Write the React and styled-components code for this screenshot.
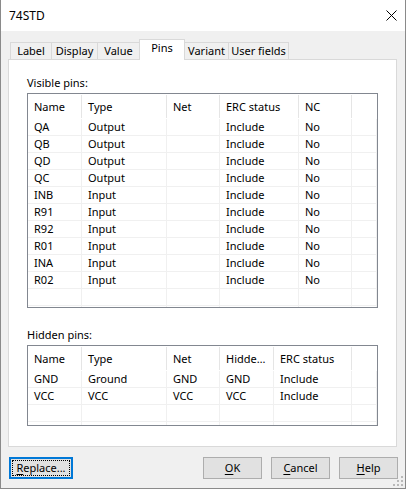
import React from "react";
import styled, { createGlobalStyle } from "styled-components";

const GlobalStyle = createGlobalStyle`
  html, body { margin: 0; padding: 0; background: #ffffff; }
  body { font-family: "Segoe UI", "Noto Sans", sans-serif; font-size: 11px; color: #000; }
  * { box-sizing: border-box; }
`;

const Window = styled.div`
  position: relative;
  width: 406px;
  height: 489px;
  border: 1px solid #8a8a8a;
  border-top: none;
  display: flex;
  flex-direction: column;
  background: #f0f0f0;
`;

const TitleBar = styled.div`
  height: 31px;
  flex: none;
  background: #ffffff;
  display: flex;
  align-items: center;
  justify-content: space-between;
  padding: 0 8px 0 8px;
  font-size: 12px;
`;

const CloseIcon = styled.svg`
  width: 11px;
  height: 11px;
  display: block;
`;

const Body = styled.div`
  flex: 1;
  display: flex;
  flex-direction: column;
  padding: 8px 8px 0 7px;
`;

const TabRow = styled.div`
  display: flex;
  align-items: flex-end;
  height: 20px;
  padding-left: 2px;
`;

const Tab = styled.div`
  width: ${(p) => p.$w}px;
  height: ${(p) => (p.$active ? 21 : 17)}px;
  margin-left: -1px;
  margin-bottom: ${(p) => (p.$active ? -1 : 0)}px;
  border: 1px solid #d9d9d9;
  border-bottom: none;
  background: ${(p) => (p.$active ? "#ffffff" : "#f0f0f0")};
  position: relative;
  z-index: ${(p) => (p.$active ? 2 : 1)};
  line-height: 15px;
  text-align: center;
  white-space: nowrap;
  &:first-child { margin-left: 0; }
`;

const Panel = styled.div`
  height: 388px;
  border: 1px solid #d9d9d9;
  background: #ffffff;
  padding: 15px 18px 20px 18px;
  display: flex;
  flex-direction: column;
`;

const GroupLabel = styled.div`
  line-height: 16px;
  height: 16px;
  margin-top: ${(p) => p.$mt || 0}px;
`;

const ListFrame = styled.div`
  margin-top: 2px;
  height: ${(p) => p.$h}px;
  border: 1px solid #828790;
  background: #ffffff;
  display: flex;
  flex-direction: column;
  overflow: hidden;
`;

const HeaderRow = styled.div`
  display: grid;
  grid-template-columns: ${(p) => p.$cols};
  height: 25px;
  flex: none;
`;

const HeaderCell = styled.div`
  position: relative;
  padding: 5px 0 0 6px;
  line-height: 15px;
  white-space: nowrap;
  overflow: hidden;
  &::after {
    content: "";
    position: absolute;
    right: 0;
    top: 1px;
    bottom: 1px;
    width: 1px;
    background: #e5e5e5;
  }
`;

const ListBody = styled.div`
  flex: 1;
  overflow: hidden;
`;

const Row = styled.div`
  display: grid;
  grid-template-columns: ${(p) => p.$cols};
  height: 17px;
  border-bottom: 1px solid #f0f0f0;
`;

const Cell = styled.div`
  border-right: 1px solid #f0f0f0;
  padding-left: 6px;
  line-height: 16px;
  white-space: nowrap;
  overflow: hidden;
`;

const Footer = styled.div`
  display: flex;
  justify-content: space-between;
  align-items: flex-start;
  padding-top: 10px;
`;

const ButtonGroup = styled.div`
  display: flex;
  gap: 9px;
  margin-right: -1px;
`;

const Button = styled.div`
  position: relative;
  width: ${(p) => p.$w}px;
  height: 22px;
  margin-left: ${(p) => p.$ml || 0}px;
  background: #e1e1e1;
  border: ${(p) => (p.$focused ? "2px solid #0078d7" : "1px solid #adadad")};
  display: flex;
  align-items: center;
  justify-content: center;
  line-height: 15px;
  padding-bottom: 1px;
  &::after {
    content: "";
    display: ${(p) => (p.$focused ? "block" : "none")};
    position: absolute;
    inset: 1px;
    border: 1px dotted #000;
  }
  u { text-decoration-thickness: 1px; text-underline-offset: 2px; }
`;

const Gripper = styled.svg`
  position: absolute;
  right: 1px;
  bottom: 1px;
  width: 12px;
  height: 12px;
`;

const visibleCols = "54px 85px 53px 79px 53px 1fr";
const hiddenCols = "54px 85px 53px 54px 78px 1fr";

const visiblePins = [
  ["QA", "Output"],
  ["QB", "Output"],
  ["QD", "Output"],
  ["QC", "Output"],
  ["INB", "Input"],
  ["R91", "Input"],
  ["R92", "Input"],
  ["R01", "Input"],
  ["INA", "Input"],
  ["R02", "Input"],
];

const hiddenPins = [
  ["GND", "Ground", "GND", "GND", "Include"],
  ["VCC", "VCC", "VCC", "VCC", "Include"],
];

const tabs = [
  ["Label", 42],
  ["Display", 47],
  ["Value", 43],
  ["Pins", 46],
  ["Variant", 45],
  ["User fields", 61],
];

export default function App() {
  return (
    <>
      <GlobalStyle />
      <Window>
        <TitleBar>
          <span>74STD</span>
          <CloseIcon viewBox="0 0 11 11">
            <path d="M0.5 0.5 L10.5 10.5 M10.5 0.5 L0.5 10.5" stroke="#000" strokeWidth="1" fill="none" />
          </CloseIcon>
        </TitleBar>
        <Body>
          <TabRow>
            {tabs.map(([t, w]) => (
              <Tab key={t} $w={w} $active={t === "Pins"}>
                {t}
              </Tab>
            ))}
          </TabRow>
          <Panel>
            <GroupLabel>Visible pins:</GroupLabel>
            <ListFrame $h={215}>
              <HeaderRow $cols={visibleCols}>
                <HeaderCell>Name</HeaderCell>
                <HeaderCell>Type</HeaderCell>
                <HeaderCell>Net</HeaderCell>
                <HeaderCell>ERC status</HeaderCell>
                <HeaderCell>NC</HeaderCell>
                <div />
              </HeaderRow>
              <ListBody>
                {visiblePins.map(([n, t]) => (
                  <Row key={n} $cols={visibleCols}>
                    <Cell>{n}</Cell>
                    <Cell>{t}</Cell>
                    <Cell />
                    <Cell>Include</Cell>
                    <Cell>No</Cell>
                    <Cell />
                  </Row>
                ))}
                {[0, 1].map((i) => (
                  <Row key={"e" + i} $cols={visibleCols}>
                    <Cell /><Cell /><Cell /><Cell /><Cell /><Cell />
                  </Row>
                ))}
              </ListBody>
            </ListFrame>
            <GroupLabel $mt={19}>Hidden pins:</GroupLabel>
            <ListFrame $h={81}>
              <HeaderRow $cols={hiddenCols}>
                <HeaderCell>Name</HeaderCell>
                <HeaderCell>Type</HeaderCell>
                <HeaderCell>Net</HeaderCell>
                <HeaderCell>Hidde…</HeaderCell>
                <HeaderCell>ERC status</HeaderCell>
                <div />
              </HeaderRow>
              <ListBody>
                {hiddenPins.map((r) => (
                  <Row key={r[0]} $cols={hiddenCols}>
                    {r.map((c, i) => (
                      <Cell key={i}>{c}</Cell>
                    ))}
                    <Cell />
                  </Row>
                ))}
                {[0, 1].map((i) => (
                  <Row key={"e" + i} $cols={hiddenCols}>
                    <Cell /><Cell /><Cell /><Cell /><Cell /><Cell />
                  </Row>
                ))}
              </ListBody>
            </ListFrame>
          </Panel>
          <Footer>
            <Button $w={64} $ml={1} $focused>
              <span><u>R</u>eplace...</span>
            </Button>
            <ButtonGroup>
              <Button $w={59}><span><u>O</u>K</span></Button>
              <Button $w={59}><span><u>C</u>ancel</span></Button>
              <Button $w={59}><span><u>H</u>elp</span></Button>
            </ButtonGroup>
          </Footer>
        </Body>
        <Gripper viewBox="0 0 12 12">
          {[[9, 1], [9, 5], [5, 5], [9, 9], [5, 9], [1, 9]].map(([x, y], i) => (
            <rect key={i} x={x} y={y} width="2" height="2" fill="#b9b9b9" />
          ))}
        </Gripper>
      </Window>
    </>
  );
}
